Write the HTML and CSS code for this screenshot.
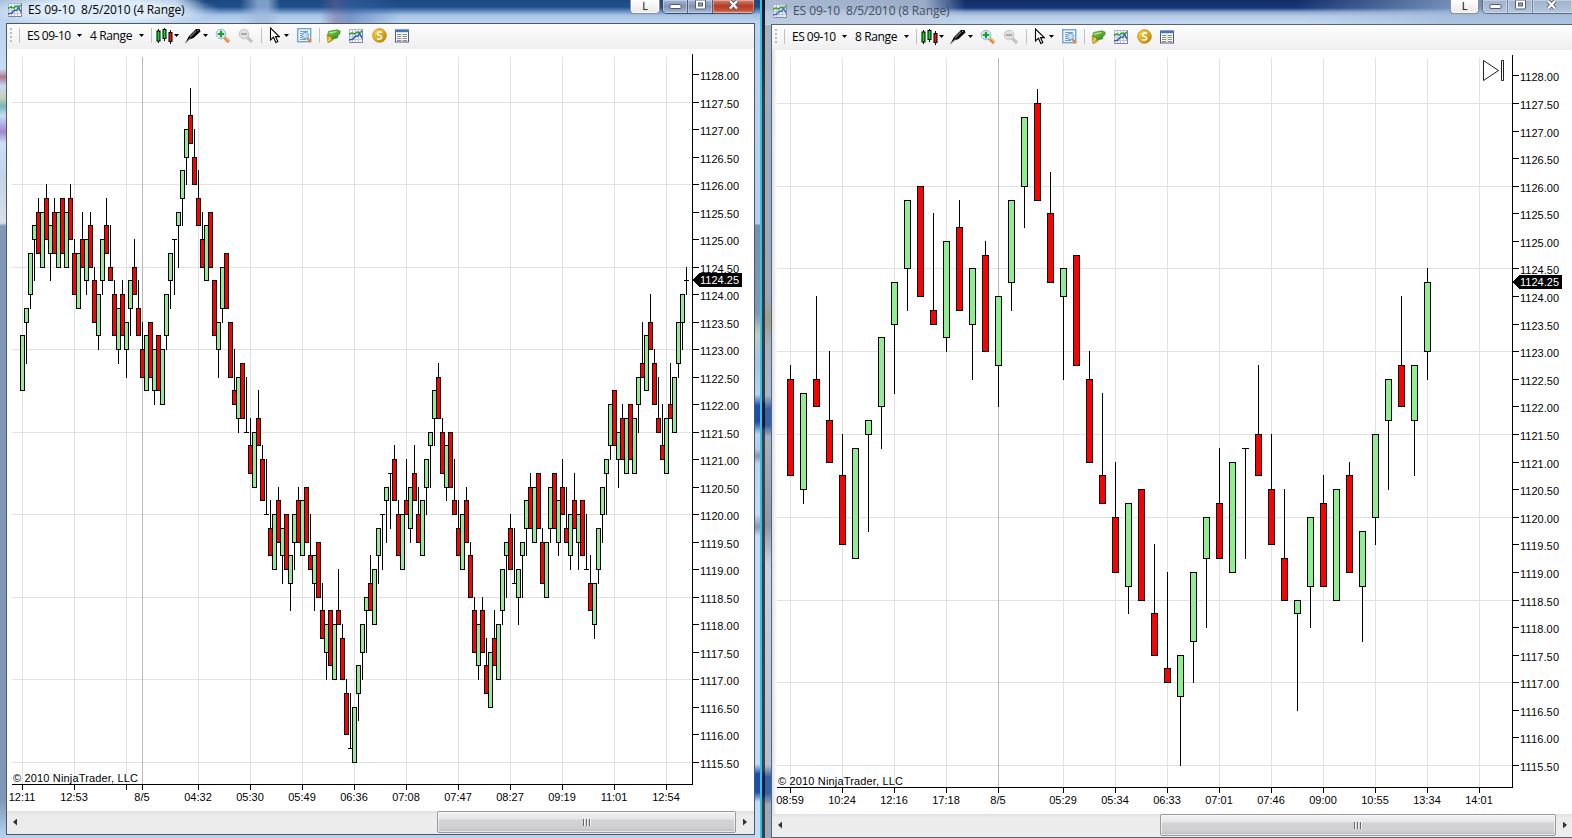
FILE: index.html
```
<!DOCTYPE html>
<html lang="en">
<head>
<meta charset="utf-8">
<title>ES 09-10 range charts</title>
<link rel="stylesheet" href="styles.css">
</head>
<body>
<svg class="defs" width="0" height="0" aria-hidden="true">
  <defs>
    <linearGradient id="coin" x1="0" y1="0" x2="1" y2="1"><stop offset="0" stop-color="#ffe14a"/><stop offset="1" stop-color="#b87800"/></linearGradient>
    <linearGradient id="ticket" x1="0" y1="0" x2="1" y2="1"><stop offset="0" stop-color="#9be05a"/><stop offset="1" stop-color="#1c7a10"/></linearGradient>
    <symbol id="i-chart" viewBox="0 0 14 14">
      <rect x=".5" y=".5" width="13" height="13" fill="#fafaff" stroke="#b4b4cc"/>
      <path d="M3.5 1v12M6.5 1v12M9.5 1v12M1 4.500h12M1 7.500h12M1 10.500h12" stroke="#c2c2dc" fill="none"/>
      <path d="M0 5.500l3-1.500 2.500 1 2.500-2 3 .5 3-2" stroke="#2fa82f" stroke-width="1.600" fill="none"/>
      <path d="M0 11l4-1 2.500-3 2 .5 2-3 3 5" stroke="#2a64b8" stroke-width="1.500" fill="none"/>
      <path d="M.5 13.500h13v-13" stroke="#8080a0" fill="none"/>
    </symbol>
    <symbol id="i-candles" viewBox="0 0 18 16">
      <path d="M2.500 1v14M8.500 0v13M14.500 2v14" stroke="#000"/>
      <rect x="1" y="3" width="3" height="10" fill="#00e020" stroke="#000"/>
      <rect x="7" y="1.500" width="3" height="9" fill="#00e020" stroke="#000"/>
      <rect x="13" y="4.500" width="3" height="9" fill="#f01010" stroke="#000"/>
    </symbol>
    <symbol id="i-pen" viewBox="0 0 16 16">
      <path d="M0 15.500L4 8l7-7 3.500 0 1 2.500-7 6.500-4 1.500z" fill="#000"/>
      <path d="M5 9l6-6" stroke="#777" stroke-width="1.200"/><path d="M12 2l1.500 1" stroke="#aaa"/>
      <path d="M1.500 14l4-4" stroke="#ddd" stroke-width=".7"/>
    </symbol>
    <symbol id="i-zoomin" viewBox="0 0 16 16">
      <path d="M9 9l5 5" stroke="#e88a3c" stroke-width="3.200"/><path d="M9.500 8.500l5 5" stroke="#f8bf88" stroke-width="1"/>
      <circle cx="6" cy="6" r="4.800" fill="#d8ecfa" stroke="#9bbcd8"/>
      <path d="M6 2.800v6.400M2.800 6h6.400" stroke="#18a028" stroke-width="2.200"/>
    </symbol>
    <symbol id="i-zoomout" viewBox="0 0 16 16">
      <path d="M9 9l5 5" stroke="#c4c4c4" stroke-width="3.200"/>
      <circle cx="6" cy="6" r="4.800" fill="#e0e0e0" stroke="#c6c6c6"/>
      <path d="M3 6h6" stroke="#aaa" stroke-width="2"/>
    </symbol>
    <symbol id="i-cursor" viewBox="0 0 11 17">
      <path d="M1.500 1v12l3-2.800 2.300 5.300 2-.9-2.300-5h3.800z" fill="#fff" stroke="#000" stroke-width="1.100"/>
    </symbol>
    <symbol id="i-databox" viewBox="0 0 15 15">
      <rect x=".7" y=".7" width="13" height="13" fill="#edf5fd" stroke="#6ea6dc" stroke-width="1.400"/>
      <path d="M3 3.500h8M3 5.500h2M3 7.500h2M3 9.500h2M3 11.500h6" stroke="#7c98bc"/>
      <path d="M10 10l3.800 3.800" stroke="#e8843a" stroke-width="2.400"/>
      <circle cx="8.300" cy="7.500" r="3.200" fill="#bfe0f8" stroke="#6a9cc8"/>
    </symbol>
    <symbol id="i-ticket" viewBox="0 0 15 14">
      <path d="M1 6l3-1 4 1.700L7 11l-5 2.800z" fill="#d9a520" stroke="#b98408" stroke-width=".7"/>
      <path d="M2.500 2.500L11 .8l3.200 1.400-.6 3-1.600.8-.5 2.800L6.500 10 4.500 7 1.800 6z" fill="url(#ticket)" stroke="#2c8a1c" stroke-width=".7"/>
      <path d="M3.500 4l7-1.400" stroke="#d2f5a8" stroke-width=".9"/>
      <path d="M2.500 12l2-4" stroke="#fff0a0"/>
    </symbol>
    <symbol id="i-coin" viewBox="0 0 15 15">
      <circle cx="7.500" cy="7.500" r="6.800" fill="url(#coin)" stroke="#c08a08" stroke-width=".9"/>
      <path d="M9.800 4.600C8.500 3.500 5.300 3.600 5.300 5.600c0 2.300 4.500 1.400 4.500 3.700 0 2-3.300 2.200-4.800 1" stroke="#fff" stroke-width="1.600" fill="none"/>
    </symbol>
    <symbol id="i-list" viewBox="0 0 14 14">
      <rect x=".5" y="1" width="13" height="12" fill="#fffef0" stroke="#4a5a80"/>
      <path d="M0 2h14" stroke="#3f74c8" stroke-width="2.400"/>
      <path d="M2 5.500h4M8 5.500h4M2 7.500h4M8 7.500h4M2 9.500h4M8 9.500h4M2 11.500h4M8 11.500h4" stroke="#7a8cae"/>
      <path d="M7 3.500v9" stroke="#d8ca80"/>
    </symbol>
  </defs>
</svg>

<main class="desktop">
  <section class="window window-active" data-chart="left"></section>
  <div class="divider"></div>
  <section class="window window-inactive" data-chart="right"></section>
</main>

<template id="window-template">
  <header class="titlebar">
    <svg class="app-icon"><use href="#i-chart"/></svg>
    <h1 class="title"></h1>
    <div class="link-button">L</div>
    <div class="caption-buttons">
      <span class="caption caption-min"><svg viewBox="0 0 13 13"><rect x="1" y="5.500" width="11" height="4" rx=".5" fill="#fff" stroke="#555c70"/></svg></span>
      <span class="caption caption-max"><svg viewBox="0 0 13 13"><rect x="1.500" y="1" width="10" height="9" rx=".5" fill="#fff" stroke="#555c70"/><rect x="4.500" y="4" width="4" height="3" fill="#8fa3c4" stroke="#555c70"/></svg></span>
      <span class="caption caption-close"><svg viewBox="0 0 13 13"><path d="M3 2l7 7.500M10 2L3 9.500" stroke="#50566a" stroke-width="4"/><path d="M3 2l7 7.500M10 2L3 9.500" stroke="#fff" stroke-width="2.300"/></svg></span>
    </div>
  </header>
  <div class="client">
    <nav class="toolbar">
      <span class="grip"></span><span class="sep sep-first"></span>
      <span class="combo combo-symbol">ES 09-10</span><i class="arrow arrow-symbol"></i>
      <span class="combo combo-range"></span><i class="arrow arrow-range"></i>
      <span class="sep sep-range"></span>
      <svg class="icon icon-candles"><use href="#i-candles"/></svg><i class="arrow arrow-candles"></i>
      <svg class="icon icon-pen"><use href="#i-pen"/></svg><i class="arrow arrow-pen"></i>
      <svg class="icon icon-zoomin"><use href="#i-zoomin"/></svg>
      <svg class="icon icon-zoomout"><use href="#i-zoomout"/></svg>
      <span class="sep sep-zoom"></span>
      <svg class="icon icon-cursor"><use href="#i-cursor"/></svg><i class="arrow arrow-cursor"></i>
      <svg class="icon icon-databox"><use href="#i-databox"/></svg>
      <span class="sep sep-data"></span>
      <svg class="icon icon-ticket"><use href="#i-ticket"/></svg>
      <svg class="icon icon-chart"><use href="#i-chart"/></svg>
      <svg class="icon icon-coin"><use href="#i-coin"/></svg>
      <svg class="icon icon-list"><use href="#i-list"/></svg>
    </nav>
    <svg class="chart"></svg>
    <div class="scrollbar">
      <span class="scroll-arrow scroll-prev"></span>
      <span class="track"></span>
      <span class="thumb"><i></i><i></i><i></i></span>
      <span class="scroll-arrow scroll-next"></span>
    </div>
  </div>
</template>
<script src="chart.js"></script>
</body>
</html>
```

FILE: styles.css
```
* { box-sizing: border-box; }
html, body { margin: 0; height: 100%; overflow: hidden; }
body { background: #fff; font-family: "Open Sans", "Noto Sans", sans-serif; color: #000; }
.defs { position: absolute; }

.desktop { display: flex; width: 1572px; height: 838px; }
.divider { width: 3px; background: linear-gradient(#15181f 0, #3c3c3c 100px, #3a3a3a 400px, #0a1830 404px, #0a1830 426px, #404040 430px, #404040 770px, #0a1c44 776px, #0a1c44 794px, #3c3c3c 800px); }

.window { display: flex; flex-direction: column; }
.window-active {
  width: 762px; padding: 0 5px 3px 6px; border-right: 2px solid #2ac4f0;
  background:
    linear-gradient(#b9cfe8 0, #c6dcf4 69px, #b0788c 77px, #c6dcf4 86px, #c4d0b8 98px, #7ab8bc 106px, #c6dcf4 116px, #a088d0 132px, #cddff6 143px, #c4d4e4 178px, #d6e0ea 223px, #7e98b6 226px, #7e98b6 800px, #b4cfee 835px) 0 0 / 6px 100% no-repeat,
    linear-gradient(#bcd6f2 0, #b4d0ee 200px, #7890ac 201px, #8098b4 290px, #c0cfc0 310px, #a8c4e4 340px, #bcd4f0 370px, #1850a8 382px, #1850a8 398px, #bcd4f0 410px, #b4cce8 425px, #8898b0 432px, #bcd4f0 440px, #c4dcf6 490px, #8898b0 503px, #c4dcf6 512px, #c4dcf6 740px, #1850a8 750px, #1850a8 768px, #c4dcf6 778px) 755px 24px / 6px 100% no-repeat,
    #b8d2ef;
}
.window-inactive {
  width: 807px; padding-left: 6px;
  background: linear-gradient(#a8b4c4 0, #9cacc0 90px, #9aa8ba 270px, #98a08c 295px, #a4b2c4 320px, #a8b8cc 370px, #3860a4 384px, #3860a4 400px, #a4b2c4 412px, #8c98a8 500px, #c8d4e4 540px, #b4c0d0 740px, #3860a4 752px, #3860a4 768px, #9caabb 780px) 0 25px / 6px 100% no-repeat, #c4d4e8;
}

.titlebar { display: flex; align-items: flex-start; flex: none; height: 23px; }
.window-active .titlebar {
  margin: 0 -5px 0 -6px; padding: 0 5px 0 8px;
  background:
    radial-gradient(ellipse 120px 17px at 100px 10px, rgba(226,238,250,.95) 55%, rgba(226,238,250,0) 100%),
    linear-gradient(90deg, rgba(190,212,238,.85) 175px, rgba(190,212,238,0) 205px, transparent 240px, rgba(160,185,220,.75) 258px, rgba(160,185,220,.75) 268px, transparent 280px, transparent 320px, rgba(110,100,150,.5) 335px, rgba(60,100,165,.5) 350px, transparent 400px),
    linear-gradient(#1c4880 0, #20508c 7px, #7098c8 12px, #a4c2e4 15px, #bed6f0 23px);
}
.window-inactive .titlebar {
  height: 24px; margin-left: -6px; padding: 0 0 0 8px;
  background:
    linear-gradient(90deg, rgba(188,202,222,.9) 0, rgba(188,202,222,.8) 160px, rgba(188,202,222,0) 200px, transparent 530px, rgba(160,185,215,.7) 690px),
    linear-gradient(#122c66 0, #17387a 8px, #8ca8d0 12px, #b8cce8 16px, #c6daf2 24px);
}
.app-icon { width: 14px; height: 14px; margin-top: 3px; flex: none; }
.window-inactive .app-icon { margin-top: 4px; opacity: .85; }
.title { margin: 0 auto 0 6px; height: 20px; line-height: 20px; font-size: 12px; font-weight: 400; white-space: pre; letter-spacing: -.08px; }
.window-inactive .title { line-height: 22px; color: #444d5c; margin-left: 6px; }
.link-button { width: 30px; height: 14px; border: 1px solid #8a8e98; border-top: 0; border-radius: 0 0 4px 4px; background: linear-gradient(#fff, #e8e8e8); box-shadow: inset 0 0 0 1px #fff; font: 11px/11px "Open Sans", sans-serif; text-align: center; margin-right: 2px; }
.caption-buttons { display: flex; width: 93px; height: 14px; border: 1px solid #3c4a66; border-top: 0; border-radius: 0 0 5px 5px; overflow: hidden; }
.caption { display: flex; justify-content: center; width: 25px; border-right: 1px solid #4c5c7c; background: linear-gradient(#a4b6d0 0, #8094b4 50%, #a8bcd8); box-shadow: inset 0 0 0 1px rgba(255,255,255,.35); }
.caption svg { width: 13px; height: 13px; margin-top: -1px; }
.caption-close { flex: 1; border-right: 0; background: linear-gradient(#d08474 0, #b43c24 45%, #c85038 80%, #e09078); }
.window-inactive .caption-buttons { width: 90px; border-right: 0; border-radius: 0 0 0 5px; border-color: #5c6a84; }
.window-inactive .link-button { width: 29px; margin-right: 3px; }
.window-inactive .caption { background: linear-gradient(#a0b2cc, #b4c6de); border-color: #7888a4; }
.window-inactive .caption-close { padding-right: 2px; }

.client { display: flex; flex-direction: column; flex: 1; min-height: 0; border: 1px solid #4c5868; background: #fff; }
.window-inactive .client { border-right: 0; border-color: #5c6470; }

.toolbar { display: flex; align-items: center; flex: none; height: 25px; padding-bottom: 2px; background: linear-gradient(#fdfdfd, #efefef); font-size: 12px; }
.toolbar > * { flex: none; }
.grip { width: 2px; height: 15px; margin-left: 3px; background: repeating-linear-gradient(#bcbcbc 0 2px, transparent 2px 4px); }
.sep { width: 1px; height: 15px; background: #c2c2c2; }
.sep-first { margin-left: 7px; }
.combo { height: 20px; line-height: 20px; white-space: pre; letter-spacing: -.5px; }
.combo-symbol { width: 44px; margin-left: 7px; }
.combo-range { width: 43px; margin-left: 8px; letter-spacing: -.36px; }
.arrow { width: 5px; height: 3px; background: #000; clip-path: polygon(0 0, 100% 0, 50% 100%); }
.arrow-symbol, .arrow-range { margin-left: 6px; }
.sep-range { margin-left: 7px; }
.icon { height: 15px; width: 15px; }
.icon-candles { width: 18px; height: 16px; margin-left: 4px; }
.arrow-candles { margin-left: 0; }
.icon-pen { width: 16px; height: 16px; margin-left: 6px; }
.arrow-pen { margin-left: 2px; }
.icon-zoomin { width: 16px; height: 16px; margin-left: 7px; }
.icon-zoomout { width: 16px; height: 16px; margin-left: 7px; }
.sep-zoom { margin-left: 7px; }
.icon-cursor { width: 11px; height: 17px; margin-left: 7px; }
.arrow-cursor { margin-left: 4px; }
.icon-databox { margin-left: 8px; }
.sep-data { margin-left: 7px; }
.icon-ticket { margin-left: 6px; height: 14px; }
.icon-chart { margin-left: 8px; width: 14px; height: 14px; }
.icon-coin { margin-left: 9px; }
.icon-list { margin-left: 8px; width: 14px; height: 14px; }

.chart { display: block; flex: 1; min-height: 0; width: 100%; shape-rendering: crispEdges; }
.window-inactive .chart { background: linear-gradient(90deg, #dedede, #fff 5px); }
.chart text { font: 11px "Liberation Sans", Arial, sans-serif; fill: #000; }
.chart .marker-text { fill: #fff; }
.grid { fill: #e2e2e2; }
.session { fill: #b8b8b8; }
.up { fill: #90ee90; }
.down { fill: #f00; }
.skip { fill: none; stroke: #222; shape-rendering: auto; }

.scrollbar { display: flex; align-items: center; flex: none; height: 23px; padding-bottom: 1px; background: linear-gradient(#e0e0e0, #ececec 4px, #ececec); }
.scroll-arrow { width: 4px; height: 7px; background: #333; }
.scroll-prev { clip-path: polygon(100% 0, 0 50%, 100% 100%); margin-left: 6px; }
.scroll-next { clip-path: polygon(0 0, 100% 50%, 0 100%); margin: 0 7px; }
.window-inactive .scroll-next { margin-right: 5px; }
.track { flex: 1; }
.thumb { display: flex; align-items: center; justify-content: center; gap: 1px; width: 299px; height: 22px; border: 1px solid #999; border-radius: 2px; background: linear-gradient(#f2f2f2 0, #e6e6e8 35%, #d3d3d6 40%, #cfcfd2 80%, #bbb); box-shadow: inset 0 0 0 1px rgba(255,255,255,.6); }
.thumb i { width: 2px; height: 7px; background: linear-gradient(90deg, #666 1px, #f4f4f4 1px); }
.window-inactive .thumb { width: 396px; }
```

FILE: chart.js
```
// Each range bar is "direction high open": g closes at its high, r at its low.
// Prices are counted in quarter-point ticks below 1128.00.
const CHARTS = {
  left: {
    title: "ES 09-10  8/5/2010 (4 Range)", range: "4 Range",
    box: [7, 49, 747, 762], x0: 22, step: 4, half: 2, span: 4,
    y: t => Math.floor(74.5 + 13.75 * t),
    top: 54, gridTop: 57, axisX: 692, axisY: 784, gridX: 12,
    lines: [22, 74, 126, 198, 250, 302, 354, 406, 458, 510, 562, 614, 666], session: 142,
    labels: ["12:11", "12:53", "", "04:32", "05:30", "05:49", "06:36", "07:08", "07:47", "08:27", "09:19", "11:01", "12:54"],
    bars: "g19.23 g17.18 g13.16 g11.12 r9.10 g10.14 r8.9 g11.13 r9.10 g10.14 r9.9 g10.14 r8.9 r12.13 g13.17 r10.12 g12.15 r10.11 r14.15 g16.19 g12.15 r9.11 r11.14 r15.16 g17.20 r15.16 g18.20 g15.17 r12.14 r15.17 r18.20 g19.23 r18.18 g20.23 r19.19 g20.24 g16.19 g13.15 g12.12 g10.11 g7.9 g4.6 r1.3 r4.6 r7.9 r10.12 g11.15 r10.10 r15.15 g18.20 g14.17 r13.13 r18.18 r20.23 g22.25 r21.21 r22.26 r25.27 g26.30 r23.25 r27.28 r28.32 r31.33 g32.36 r30.31 g33.35 r32.32 g35.37 g32.34 r30.31 g31.35 r30.30 r32.35 g35.37 r34.34 r37.39 g40.42 r39.39 g40.44 r36.39 r40.41 r44.45 r45.49 g46.50 g43.45 g40.42 g38.39 r35.37 g36.40 g33.35 g32.32 g30.31 g29.29 r27.28 r31.32 g32.36 r28.31 g30.33 r27.29 r30.32 g31.35 g28.30 g26.27 g23.25 r21.22 r25.26 g27.30 r26.26 r28.31 r31.33 g32.36 r30.31 r34.35 r38.39 g40.43 r38.39 r41.43 g42.46 r39.41 g40.44 g36.39 g34.35 r32.33 r33.37 g36.38 g34.35 g31.33 r29.30 g30.34 r29.29 r33.34 g34.38 g30.33 r29.29 g31.34 r28.30 r30.33 g32.35 r29.31 g32.34 r31.31 r32.36 r35.37 g37.40 g33.36 g30.32 g28.29 g24.27 r23.23 g26.28 r24.25 g25.29 r24.24 g25.29 g22.24 r18.21 g19.23 r16.18 r20.21 r22.25 r24.27 g25.29 r21.24 g22.26 g18.21 g16.18",
    last: [14, 15, 15, 16]
  },
  right: {
    title: "ES 09-10  8/5/2010 (8 Range)", range: "8 Range",
    box: [772, 50, 800, 764], x0: 790, step: 13, half: 3, span: 8,
    y: t => Math.round(75.38 + 13.793 * t),
    top: 55, gridTop: 58, axisX: 1512, axisY: 787, gridX: 777,
    lines: [790, 842, 894, 946, 1063, 1115, 1167, 1219, 1271, 1323, 1375, 1427, 1479], session: 998,
    labels: ["08:59", "10:24", "12:16", "17:18", "05:29", "05:34", "06:33", "07:01", "07:46", "09:00", "10:55", "13:34", "14:01"],
    bars: "r21.22 g23.30 r16.22 r20.25 r26.29 g27.35 g25.26 g19.24 g15.18 g9.14 r8.8 r10.17 g12.19 r9.11 g14.18 r12.13 g16.21 g9.15 g3.8 r1.2 r7.10 g14.16 r13.13 r20.22 r23.29 r28.32 g31.37 r30.30 r34.39 r36.43 g42.45 g36.41 g32.35 r27.31 g28.36 g27.27 r21.26 r26.30 r30.35 g38.39 g32.37 r29.31 g30.38 r28.29 g33.37 g26.32 g22.25 r16.21 g21.25",
    last: [14, 15, 20, 22],
    skip: true
  }
};

const rect = (x, y, w, h, cls = "") => `<rect x="${x}" y="${y}" width="${w}" height="${h}"${cls && ` class="${cls}"`}/>`;

function candle(c, x, high, top, bottom, low, cls) {
  const yt = c.y(top), yb = c.y(bottom), w = c.half * 2 + 1;
  let out = rect(x, c.y(high), 1, c.y(low) - c.y(high) + 1);
  out += rect(x - c.half, yt, w, yb - yt + 1);
  if (bottom > top) out += rect(x - c.half + 1, yt + 1, w - 2, yb - yt - 1, cls);
  return out;
}

function drawChart(c) {
  let s = "";
  c.lines.forEach(x => { s += rect(x, c.gridTop, 1, c.axisY - c.gridTop, "grid"); });
  for (let t = 2; t <= 50; t += 6) s += rect(c.gridX, c.y(t), c.axisX - c.gridX, 1, "grid");
  s += rect(c.session, c.gridTop, 1, c.axisY - c.gridTop, "session");

  const bars = c.bars.split(" ");
  bars.forEach((b, i) => {
    const [high, open] = b.slice(1).split(".").map(Number);
    const low = high + c.span, up = b[0] === "g";
    s += candle(c, c.x0 + i * c.step, high, up ? high : open, up ? open : low, low, up ? "up" : "down");
  });
  s += candle(c, c.x0 + bars.length * c.step, ...c.last, "up");

  s += rect(c.axisX, c.top, 1, c.axisY - c.top + 1) + rect(c.gridX, c.axisY, c.axisX - c.gridX, 1);
  for (let t = 0; t <= 50; t += 2) {
    s += rect(c.axisX + 1, c.y(t), 6, 1);
    s += `<text x="${c.axisX + 8}" y="${c.y(t) + 6}" textLength="39">${(1128 - t / 4).toFixed(2)}</text>`;
  }
  const times = c.lines.map((x, i) => [x, c.labels[i]]).concat([[c.session, "8/5"]]);
  times.forEach(([x, label]) => {
    s += rect(x, c.axisY + 1, 1, 5);
    if (label) s += `<text x="${x}" y="${c.axisY + 17}" text-anchor="middle">${label}</text>`;
  });
  s += `<text x="${c.gridX + 1}" y="${c.axisY - 2}" textLength="125">© 2010 NinjaTrader, LLC</text>`;

  const my = c.y(15), mx = c.axisX + 1;
  s += `<path d="M${mx} ${my}l6 -7h43v14h-43z"/><text class="marker-text" x="${c.axisX + 8}" y="${my + 4}" textLength="39">1124.25</text>`;
  if (c.skip) s += `<path class="skip" d="M1483.500 60.500v20l15-10z"/><path class="skip" d="M1501.500 60.500h2v20h-2z"/>`;
  return s;
}

document.querySelectorAll("[data-chart]").forEach(win => {
  const c = CHARTS[win.dataset.chart];
  win.append(document.getElementById("window-template").content.cloneNode(true));
  win.querySelector(".title").textContent = c.title;
  win.querySelector(".combo-range").textContent = c.range;
  const svg = win.querySelector(".chart");
  svg.setAttribute("viewBox", c.box.join(" "));
  svg.setAttribute("preserveAspectRatio", "xMinYMin meet");
  svg.innerHTML = drawChart(c);
});
```
